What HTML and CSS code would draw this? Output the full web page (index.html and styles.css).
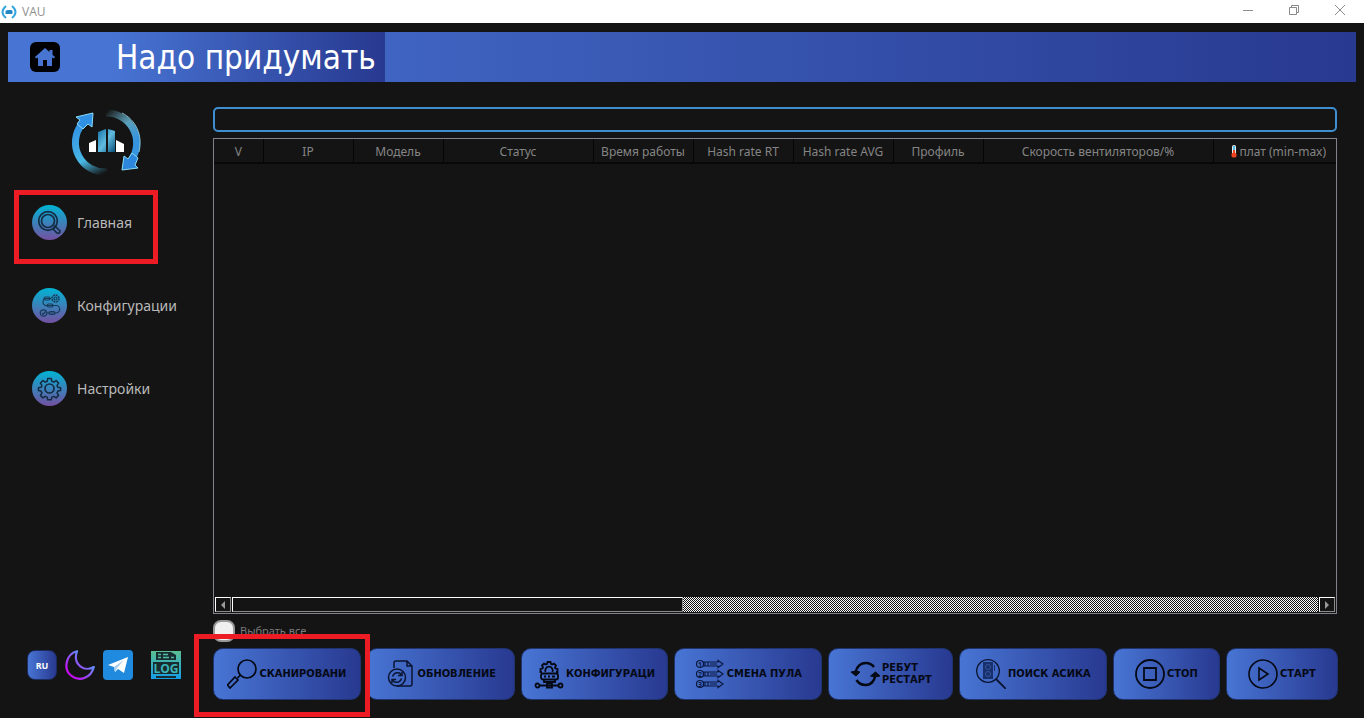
FILE: index.html
```html
<!DOCTYPE html>
<html lang="ru">
<head>
<meta charset="utf-8">
<title>VAU</title>
<link rel="stylesheet" href="styles.css">
</head>
<body>
<svg class="defs" aria-hidden="true">
  <defs>
    <linearGradient id="disc" x1="0" y1="0" x2="0" y2="1"><stop offset="0" stop-color="#00b4d4"/><stop offset="1" stop-color="#7450a0"/></linearGradient>
    <linearGradient id="arcR" gradientUnits="userSpaceOnUse" x1="34" y1="4" x2="62" y2="34"><stop offset="0" stop-color="#6fb6cc" stop-opacity="0"/><stop offset=".55" stop-color="#5a9fb9"/><stop offset="1" stop-color="#3595df"/></linearGradient>
    <linearGradient id="arcL" gradientUnits="userSpaceOnUse" x1="6" y1="14" x2="31" y2="66"><stop offset="0" stop-color="#3090e4"/><stop offset=".65" stop-color="#49b8e4"/><stop offset="1" stop-color="#49b8e4" stop-opacity="0"/></linearGradient>
    <linearGradient id="tower" x1="0" y1="0" x2="1" y2="1"><stop offset="0" stop-color="#1471a5"/><stop offset=".5" stop-color="#62bce0"/><stop offset="1" stop-color="#075078"/></linearGradient>
    <linearGradient id="moon" x1="0" y1="1" x2="1" y2="0"><stop offset=".15" stop-color="#c80cf4"/><stop offset=".9" stop-color="#3fb8f8"/></linearGradient>
    <linearGradient id="log" x1="0" y1="0" x2="0" y2="1"><stop offset="0" stop-color="#5cbf91"/><stop offset="1" stop-color="#139de8"/></linearGradient>
  </defs>
</svg>

<header class="titlebar">
  <svg class="app-icon" viewBox="0 0 16 16"><path d="M5 2Q-2 8 5 14M11 2Q18 8 11 14" fill="none" stroke="#36a5dd" stroke-width="2"/><path d="M4.500 10V7l2-1h4l1 1v3z" fill="#2387c5"/></svg>
  <span class="app-name">VAU</span>
  <div class="window-controls">
    <button aria-label="Свернуть"><svg viewBox="0 0 10 10"><path d="M0 5.500h10"/></svg></button>
    <button aria-label="Развернуть"><svg viewBox="0 0 10 10"><path d="M.5 2.500h7v7h-7zM2.500 2.500v-2h7v7h-2"/></svg></button>
    <button aria-label="Закрыть"><svg viewBox="0 0 10 10"><path d="M0 0l10 10M10 0L0 10"/></svg></button>
  </div>
</header>

<div class="banner">
  <div class="banner-title">
    <button class="home" aria-label="Домой"><svg viewBox="0 0 30 30"><path fill="#4875d2" d="M15 6L5 15l1 1.500 2-1V24h5v-6h4v6h5v-8.500l2 1 1-1.500-2.500-2.300V8H19.500v2z"/></svg></button>
    <h1>Надо придумать</h1>
  </div>
</div>

<div class="layout">
  <aside class="sidebar">
    <svg class="logo" viewBox="0 0 70 68">
      <path d="M35 64A29.500 29.500 0 0 1 10 16" fill="none" stroke="url(#arcL)" stroke-width="7"/>
      <path d="M4 9l17-4-1 14-4-3-5 5-6-5 3-4z" fill="#3090e4" stroke="#8bdcf4" stroke-width="1"/>
      <path d="M34 5A30 30 0 0 1 60 51" fill="none" stroke="url(#arcR)" stroke-width="7"/>
      <path d="M50 62l2-14 4 3 4-6 6 5-3 7 3 3z" fill="#2b86dc" stroke="#8bdcf4" stroke-width="1"/>
      <path d="M50 5C64 12 71 27 67 44" fill="none" stroke="#a1dcec" stroke-width="1" opacity=".8"/>
      <path d="M17 44V35l7-3v12zM52 44V36l-8-4v12z" fill="#fff"/>
      <path d="M26 44V24l8-3v23zM36 44V21l7 2v21z" fill="url(#tower)"/>
    </svg>
    <nav>
      <a href="#main" class="nav-item marked">
        <svg viewBox="0 0 35 35"><circle cx="17.500" cy="17.500" r="17.500" fill="url(#disc)"/><g fill="none" stroke="#142c43" stroke-width="1.700"><circle cx="16" cy="16" r="9.300"/><circle cx="16" cy="16" r="6.500"/><path d="M21 24l2-3 5 5q0 3-3 2z"/></g></svg>
        <span>Главная</span>
      </a>
      <a href="#config" class="nav-item">
        <svg viewBox="0 0 35 35"><circle cx="17.500" cy="17.500" r="17.500" fill="url(#disc)"/><g fill="none" stroke="#173c5a" stroke-width="1.200"><path d="M19 10.500H13a4 4 0 0 0 0 7h11a3.500 3.500 0 0 1 0 7.500H15"/><rect x="12" y="9" width="6" height="3" rx="1.500"/><rect x="15" y="16" width="6" height="3" rx="1.500"/><rect x="17" y="23.500" width="6" height="3" rx="1.500"/><circle cx="23.500" cy="10.500" r="3.500" stroke-width="1.500" stroke-dasharray="2 .7"/><circle cx="23.500" cy="10.500" r="1.500"/><circle cx="11.500" cy="25" r="3.200"/><path d="M10 25l1 1.500 2.500-3"/></g></svg>
        <span>Конфигурации</span>
      </a>
      <a href="#settings" class="nav-item">
        <svg viewBox="0 0 35 35"><circle cx="17.500" cy="17.500" r="17.500" fill="url(#disc)"/><g fill="none" stroke="#142c43" stroke-width="1.700" stroke-linejoin="round"><circle cx="17.500" cy="17.500" r="4.500"/><path transform="translate(1.750 1.750) scale(.9)" d="M15.500 6.500h4l.6 3 2.100.9 2.600-1.700 2.800 2.800-1.700 2.600.9 2.100 3 .6v3l-3 .6-.9 2.100 1.700 2.600-2.800 2.800-2.600-1.700-2.100.9-.6 3h-4l-.6-3-2.100-.9-2.600 1.700-2.800-2.800 1.700-2.600-.9-2.100-3-.6v-3l3-.6.9-2.100-1.700-2.600 2.800-2.800 2.600 1.700 2.100-.9z"/></g></svg>
        <span>Настройки</span>
      </a>
    </nav>
    <div class="tools">
      <button class="lang">RU</button>
      <button class="tool" aria-label="Тёмная тема"><svg viewBox="0 0 30 30"><path d="M12 1.200C1 4 -2 19 6 25.500c8 6.500 20 3 22.800-8.500C21 22 7 16 12 1.200z" fill="none" stroke="url(#moon)" stroke-width="2.200" stroke-linejoin="round"/></svg></button>
      <button class="tool" aria-label="Telegram"><svg viewBox="0 0 30 30"><rect width="30" height="30" rx="4" fill="#1f8ade"/><path d="M5 15L25 7 21 23l-6-4-3 3-1-5z" fill="#fff"/><path d="M11 17l10-7-7 8-2 4z" fill="#a8cdec"/></svg></button>
      <button class="tool log" aria-label="Журнал"><svg viewBox="0 0 30 28"><path d="M0 0h30v28H0z" fill="url(#log)"/><g fill="#182c30"><path d="M5 1h15l5 3v5H5zM2 11h26v12H2zM5 25h20v2H5z"/></g><path d="M7 3.500h3M7 6.500h3M12 3.500h5M12 6.500h6M20 6.500h3" stroke="#52baa0" stroke-width="1.500"/><text x="15" y="21.500" text-anchor="middle" class="log-text">LOG</text></svg></button>
    </div>
  </aside>

  <main class="content">
    <input class="search" type="text" aria-label="Поиск">
    <div class="grid-frame">
      <table>
        <colgroup><col class="w49"><col class="w90"><col class="w90"><col class="w150"><col class="w100"><col class="w100"><col class="w100"><col class="w90"><col class="w230"><col></colgroup>
        <thead><tr>
          <th>V</th><th>IP</th><th>Модель</th><th>Статус</th><th>Время работы</th><th>Hash rate RT</th><th>Hash rate AVG</th><th>Профиль</th><th>Скорость вентиляторов/%</th>
          <th class="temp"><svg viewBox="0 0 6 13"><rect x="1" width="4" height="10" rx="2" fill="#e8eef0"/><path d="M2 1h2v4H2z" fill="#4cb9e5"/><path d="M2 5h2v4H2z" fill="#f04420"/><circle cx="3" cy="10" r="2.600" fill="#f04420"/></svg>плат (min-max)</th>
        </tr></thead>
      </table>
      <div class="scrollbar">
        <button aria-label="Влево"><svg viewBox="0 0 4 8"><path d="M4 0v8L0 4z"/></svg></button>
        <div class="track"><div class="thumb"></div></div>
        <button aria-label="Вправо"><svg viewBox="0 0 4 8"><path d="M0 0v8l4-4z"/></svg></button>
      </div>
    </div>
    <label class="select-all"><input type="checkbox">Выбрать все</label>
    <div class="actions">
      <button class="action marked">
        <svg viewBox="0 0 30 30"><g fill="none" stroke="#050914" stroke-width="1.700"><circle cx="20" cy="10" r="9"/><path d="M13.500 16l-3 3M8 18l3 3-8 8-2.500-3z"/></g></svg><span>СКАНИРОВАНИ</span>
      </button>
      <button class="action">
        <svg viewBox="0 0 30 30"><g fill="none" stroke="#0a1430" stroke-width="1.500"><path d="M9 9V4q0-2 2-2h11l5 5v18q0 2-2 2H12M22 2v5h5"/><circle cx="12" cy="18.500" r="8.500"/><path d="M7.500 17.500q2-5 7-3.500l2 2M16.500 19.500q-2 5-7 3.500l-2-2"/><path d="M17 13v3.500h-4M7 24v-3.500h4"/></g></svg><span>ОБНОВЛЕНИЕ</span>
      </button>
      <button class="action">
        <svg viewBox="0 0 30 30"><g fill="none" stroke="#050914" stroke-width="1.800"><path d="M8 13H6.500v-3l2-.5.5-1-1-2 2-2 2 1 1-.5.500-2h3l.5 2 1 .5 2-1 2 2-1 2 .5 1 2 .5v3H22"/><path d="M11.500 13a3.800 3.800 0 1 1 7 0"/><rect x="7" y="14.500" width="17" height="6" rx="2"/><path d="M10 17.500h2M14 17.500h2M18 17.500h3M10 20v3h11v-3M15 22v3M5 26.500h20"/><circle cx="3.500" cy="26.500" r="2"/><circle cx="26.500" cy="26.500" r="2"/><path d="M13 24.500h5v4h-5z"/></g></svg><span>КОНФИГУРАЦИ</span>
      </button>
      <button class="action">
        <svg viewBox="0 0 30 30"><g id="pool-row" fill="none" stroke="#0b1840" stroke-width="1.200"><circle cx="5" cy="5" r="3.500"/><path d="M8 3h15V1.500L28 5l-5 3.500V7H8M10 3v4M13 3v4M15 5h7"/></g><use href="#pool-row" y="10"/><use href="#pool-row" y="20"/><g class="pool-num"><text x="3" y="7.500">1</text><text x="3" y="17.500">2</text><text x="3" y="27.500">3</text></g></svg><span>СМЕНА ПУЛА</span>
      </button>
      <button class="action short">
        <svg viewBox="0 0 30 30"><g fill="none" stroke="#050914" stroke-width="2.500"><path d="M5.500 13Q8 4 16 4q5 0 8 4M25.500 16q-2 10-10 10-6 0-9-5"/></g><path d="M1 13l5 4 4-4-4-1zM20.500 17l5-4 4.500 4-5 1z" fill="#050914" stroke="#050914"/></svg><span>РЕБУТ<br>РЕСТАРТ</span>
      </button>
      <button class="action">
        <svg viewBox="0 0 30 30"><g fill="none" stroke="#0a1430" stroke-width="1.300"><circle cx="12" cy="12" r="11.300"/><path d="M20 20l10 10" stroke-width="1.800"/></g><path d="M7 3h10v17H7zM18 6h1v6h-1z" fill="#18306c"/><g fill="none" stroke="#34559f"><circle cx="12" cy="8" r="2.500"/><circle cx="12" cy="15" r="2.500"/></g></svg><span>ПОИСК АСИКА</span>
      </button>
      <button class="action stop">
        <svg viewBox="0 0 30 30"><g fill="none" stroke="#050914" stroke-width="1.800"><circle cx="15" cy="15" r="14"/><path d="M9 9h12v12H9z"/></g></svg><span>СТОП</span>
      </button>
      <button class="action start">
        <svg viewBox="0 0 30 30"><g fill="none" stroke="#050914" stroke-width="1.600"><circle cx="15" cy="15" r="14"/><path d="M11 9v12l9-6z"/></g></svg><span>СТАРТ</span>
      </button>
    </div>
  </main>
</div>
</body>
</html>
```

FILE: styles.css
```css
* { box-sizing: border-box; }
body {
  margin: 0;
  min-height: 100vh;
  display: flex;
  flex-direction: column;
  background: #141414;
  color: #b9b9b9;
  font-family: "Noto Sans", "Open Sans", sans-serif;
}
button { border: 0; padding: 0; background: none; font-family: inherit; }
svg { display: block; flex: none; }
.defs { position: absolute; width: 0; height: 0; }

.titlebar {
  display: flex;
  align-items: center;
  height: 23px;
  padding: 0 17px 0 1px;
  background: #fff;
  color: #8f8f8f;
  font: 12px "Open Sans", sans-serif;
}
.app-icon { width: 16px; height: 16px; }
.app-name { margin-left: 5px; }
.window-controls { display: flex; gap: 34px; margin: 0 0 3px auto; }
.window-controls button { width: 12px; height: 12px; }
.window-controls svg { width: 10px; height: 10px; fill: none; stroke: #8a8a8a; stroke-width: 1; }

.banner {
  display: flex;
  margin: 9px 8px 0;
  background: linear-gradient(90deg, #4875d4 0%, #283990 100%);
}
.banner-title {
  display: flex;
  align-items: center;
  height: 50px;
  padding: 0 9px 0 22px;
  background: linear-gradient(90deg, #4875d4 27%, #283990 100%);
}
.home { width: 30px; height: 30px; border-radius: 6px; background: #000; }
h1 {
  margin: 0 0 0 56px;
  padding-top: 2px;
  color: #fff;
  font-family: "DejaVu Sans Condensed", "Noto Sans", sans-serif;
  font-size: 33px;
  font-weight: 400;
  line-height: 48px;
}

.layout { flex: 1; display: flex; }
.sidebar { width: 213px; display: flex; flex-direction: column; padding: 26px 0 38px; }
.logo { width: 70px; height: 68px; margin-left: 72px; overflow: visible; }
nav { display: flex; flex-direction: column; gap: 48px; margin: 29px 0 0 32px; }
.nav-item {
  position: relative;
  align-self: flex-start;
  display: flex;
  align-items: center;
  gap: 10px;
  color: #b9b9b9;
  font-size: 14px;
  line-height: 20px;
  text-decoration: none;
}
.nav-item svg { width: 35px; height: 35px; }
.marked::after {
  content: "";
  position: absolute;
  border: 5px solid #ed1c24;
  z-index: 2;
  pointer-events: none;
}
.nav-item.marked::after { inset: -15px -26px -24px -18px; }

.tools { display: flex; align-items: center; gap: 8px; margin: auto 0 0 27px; }
.tool { width: 30px; height: 30px; }
.tool svg { width: 100%; height: 100%; }
.tool.log { margin-left: 10px; }
.log-text { font: 700 12px "Open Sans", sans-serif; fill: #3bb4b7; }
.lang {
  width: 30px;
  height: 30px;
  border: 1px solid #1c2b60;
  border-radius: 8px;
  background: linear-gradient(90deg, #4875d4, #283990);
  color: #fff;
  font-size: 9px;
  font-weight: 700;
}

.content { flex: 1; min-width: 0; display: flex; flex-direction: column; gap: 6px; padding: 25px 27px 18px 0; }
.search {
  width: 100%;
  height: 25px;
  padding: 0 6px;
  border: 2px solid #3f8fd0;
  border-radius: 5px;
  background: #141414;
  color: #b9b9b9;
  outline: 0;
}
.grid-frame {
  flex: 1;
  display: flex;
  flex-direction: column;
  justify-content: space-between;
  border: 1px solid #84818e;
}
table { width: 100%; table-layout: fixed; border-collapse: collapse; }
.w49 { width: 49px; }
.w90 { width: 90px; }
.w100 { width: 100px; }
.w150 { width: 150px; }
.w230 { width: 230px; }
th {
  height: 24px;
  padding: 2px 0 0;
  border-right: 1px solid #050505;
  border-bottom: 2px solid #080808;
  color: #858585;
  font-size: 12px;
  font-weight: 400;
  line-height: 20px;
  white-space: nowrap;
}
th:last-child { border-right: 0; }
.temp { padding-left: 8px; }
.temp svg { display: inline-block; width: 6px; height: 13px; margin-right: 2px; vertical-align: -2px; }

.scrollbar { display: flex; height: 17px; padding: 1px; gap: 1px; }
.scrollbar button {
  width: 16px;
  display: grid;
  place-items: center;
  border: 1px solid;
  border-color: #fff #8a8a8a #8a8a8a #fff;
}
.scrollbar svg { width: 4px; height: 8px; fill: #9a9a9a; }
.track {
  flex: 1;
  background: repeating-conic-gradient(#141414 0 25%, #fff 0 50%) 0 0 / 2px 2px;
}
.thumb {
  width: 41.500%;
  height: 100%;
  border: 1px solid;
  border-color: #fff #8a8a8a #8a8a8a #fff;
  background: #141414;
}

.select-all { display: flex; align-items: center; gap: 5px; height: 22px; color: #7b7b7b; font-size: 11px; line-height: 22px; }
.select-all input {
  appearance: none;
  width: 22px;
  height: 22px;
  margin: 0;
  border: 2px solid #999;
  border-radius: 8px;
  background: #f0f0f0;
}

.actions { display: flex; gap: 6px; margin-right: -1px; }
.action {
  position: relative;
  flex: 148 1 0;
  height: 52px;
  display: flex;
  align-items: center;
  justify-content: center;
  gap: 2px;
  border: 1px solid #203371;
  border-radius: 10px;
  background: linear-gradient(90deg, #4875d4, #283990);
  color: #050914;
  font-family: "DejaVu Sans Condensed", "Noto Sans", sans-serif;
  font-size: 11px;
  font-weight: 700;
  line-height: 12px;
  text-align: left;
  white-space: nowrap;
}
.action svg { width: 30px; height: 30px; }
.action.short { flex-grow: 125; }
.action.stop { flex-grow: 106; }
.action.start { flex-grow: 112; }
.action.marked::after { inset: -15px -10px -18px -20px; }
.pool-num { font: 700 7px "Noto Sans", sans-serif; fill: #0b1840; }
```
